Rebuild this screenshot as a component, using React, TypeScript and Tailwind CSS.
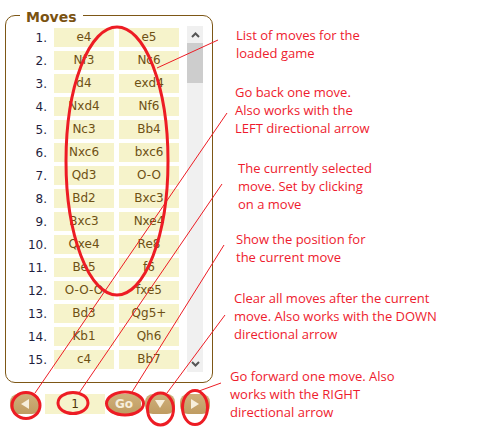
import React from "react";

const moves: [string, string][] = [
  ["e4", "e5"],
  ["Nf3", "Nc6"],
  ["d4", "exd4"],
  ["Nxd4", "Nf6"],
  ["Nc3", "Bb4"],
  ["Nxc6", "bxc6"],
  ["Qd3", "O-O"],
  ["Bd2", "Bxc3"],
  ["Bxc3", "Nxe4"],
  ["Qxe4", "Re8"],
  ["Be5", "f6"],
  ["O-O-O", "fxe5"],
  ["Bd3", "Qg5+"],
  ["Kb1", "Qh6"],
  ["c4", "Bb7"],
];

const notes = [
  { ml: "ml-[21px]", mt: "mt-[26px]", lines: ["List of moves for the", "loaded game"] },
  { ml: "ml-[20px]", mt: "mt-[21px]", lines: ["Go back one move.", "Also works with the", "LEFT directional arrow"] },
  { ml: "ml-[23px]", mt: "mt-[22px]", lines: ["The currently selected", "move. Set by clicking", "on a move"] },
  { ml: "ml-[21px]", mt: "mt-[17px]", lines: ["Show the position for", "the current move"] },
  { ml: "ml-[19px]", mt: "mt-[23px]", lines: ["Clear all moves after the current", "move. Also works with the DOWN", "directional arrow"] },
  { ml: "ml-[15px]", mt: "mt-[24px]", lines: ["Go forward one move. Also", "works with the RIGHT", "directional arrow"] },
];

function Chevron({ down }: { down?: boolean }) {
  return (
    <svg width="9" height="6" viewBox="0 0 9 6">
      <path
        d={down ? "M1 1 L4.5 4.5 L8 1" : "M1 5 L4.5 1.5 L8 5"}
        fill="none"
        stroke="#555"
        strokeWidth="2"
      />
    </svg>
  );
}

function TanButton({ w, children }: { w: string; children: React.ReactNode }) {
  return (
    <div
      className={`${w} h-[20px] rounded-[8px] bg-gradient-to-b from-[#cfb07a] to-[#bf9c62] flex items-center justify-center`}
    >
      {children}
    </div>
  );
}

function MovesPanel() {
  return (
    <div className="w-[215px] pl-[5px] pt-[15px] shrink-0">
      <div className="h-[368px] w-[208px] rounded-[10px] border border-[#7d5716]">
        <div className="-mt-[11px] ml-[14px] h-[16px]">
          <span className="bg-white px-[6px] text-[14px] font-bold leading-[16px] text-[#7a5211]">Moves</span>
        </div>
        <div className="mt-[5px] flex">
          <div className="h-[346px] w-[181px] overflow-hidden pt-[2px]">
            {moves.map(([w, b], i) => (
              <div key={i} className="mb-[4px] flex h-[19px] items-center">
                <span className="w-[41px] text-right text-[12px] text-[#1e1e40]">{i + 1}.</span>
                <span className="ml-[7px] w-[60px] bg-[#f6f3cb] text-center text-[12px] leading-[19px] text-[#6e5014]">{w}</span>
                <span className="ml-[5px] w-[60px] bg-[#f6f3cb] text-center text-[12px] leading-[19px] text-[#6e5014]">{b}</span>
              </div>
            ))}
          </div>
          <div className="flex h-[346px] w-[16px] flex-col bg-[#f0f0f0]">
            <div className="flex h-[17px] items-center justify-center">
              <Chevron />
            </div>
            <div className="h-[40px] bg-[#cdcdcd]" />
            <div className="flex-1" />
            <div className="flex h-[17px] items-center justify-center">
              <Chevron down />
            </div>
          </div>
        </div>
      </div>
      <div className="ml-[5px] mt-[11px] flex items-center">
        <TanButton w="w-[30px]">
          <svg width="9" height="10" viewBox="0 0 9 10">
            <path d="M8 0 L8 10 L0 5 Z" fill="#f7efdc" />
          </svg>
        </TanButton>
        <div className="ml-[5px] h-[20px] w-[60px] bg-[#f6f3cb] text-center text-[12px] leading-[20px] text-[#4e3508]">1</div>
        <div className="ml-[2px]">
          <TanButton w="w-[34px]">
            <span className="text-[12px] font-bold text-[#f6eedc]">Go</span>
          </TanButton>
        </div>
        <div className="ml-[4px]">
          <TanButton w="w-[30px]">
            <svg width="10" height="9" viewBox="0 0 10 9">
              <path d="M0 0 L10 0 L5 8 Z" fill="#f7efdc" />
            </svg>
          </TanButton>
        </div>
        <div className="ml-[5px]">
          <TanButton w="w-[30px]">
            <svg width="9" height="10" viewBox="0 0 9 10">
              <path d="M0 0 L0 10 L8 5 Z" fill="#f7efdc" />
            </svg>
          </TanButton>
        </div>
      </div>
    </div>
  );
}

function Notes() {
  return (
    <div className="flex flex-col font-['Open_Sans',sans-serif] text-[13px] leading-[18px] text-[#ee1b2e]">
      {notes.map((n, i) => (
        <div key={i} className={`${n.ml} ${n.mt}`}>
          {n.lines.map((l, j) => (
            <div key={j} className="whitespace-nowrap">{l}</div>
          ))}
        </div>
      ))}
    </div>
  );
}

function Marks() {
  const red = "#ed1c24";
  return (
    <svg className="pointer-events-none absolute left-0 top-0" width="480" height="433" viewBox="0 0 480 433">
      <g fill="none" stroke={red}>
        <ellipse cx="117" cy="161" rx="51" ry="134" strokeWidth="3" />
        <ellipse cx="26" cy="405.5" rx="14" ry="13" strokeWidth="3" />
        <ellipse cx="73" cy="403" rx="15" ry="10.5" strokeWidth="3" />
        <ellipse cx="125" cy="403.5" rx="18.5" ry="11.5" strokeWidth="3" />
        <ellipse cx="160.5" cy="409" rx="13" ry="16" strokeWidth="3" />
        <ellipse cx="195" cy="407.5" rx="12.5" ry="17" strokeWidth="3" />
        <line x1="157" y1="68" x2="218" y2="40" strokeWidth="1" />
        <line x1="227" y1="113" x2="35" y2="393" strokeWidth="1" />
        <line x1="222" y1="184" x2="79" y2="393" strokeWidth="1" />
        <line x1="224" y1="245" x2="132" y2="392" strokeWidth="1" />
        <line x1="225" y1="315" x2="167" y2="393" strokeWidth="1" />
        <line x1="221" y1="383" x2="199" y2="391" strokeWidth="1" />
      </g>
    </svg>
  );
}

export default function App() {
  return (
    <div className="relative h-[433px] w-[480px] overflow-hidden bg-white font-['DejaVu_Sans',sans-serif]">
      <div className="flex">
        <MovesPanel />
        <Notes />
      </div>
      <Marks />
    </div>
  );
}
